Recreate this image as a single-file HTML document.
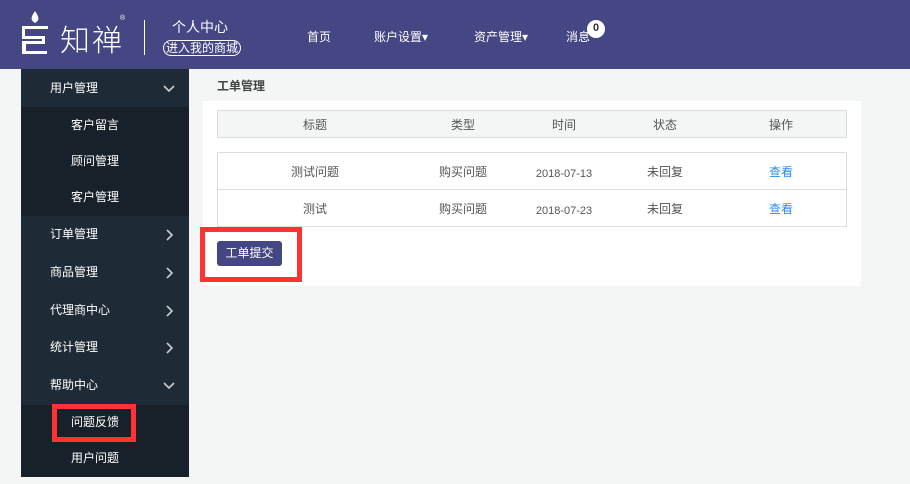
<!DOCTYPE html>
<html><head><meta charset="utf-8"><style>
*{margin:0;padding:0;box-sizing:border-box}
body{width:910px;height:484px;background:#f4f5f5;font-family:"Liberation Sans","Noto Sans CJK SC",sans-serif;font-size:12px;position:relative;overflow:hidden}
.hd{position:absolute;left:0;top:0;width:910px;height:69px;background:#444784;color:#fff}
.a{position:absolute;white-space:nowrap}
.sb{position:absolute;left:21px;top:69px;width:168px;height:408px;background:#1e2a36}
.it{position:absolute;left:0;width:168px;height:38px;line-height:38px;color:#fff;font-size:12px;padding-left:29px}
.sub{position:absolute;left:0;width:168px;background:#18202a}
.ch{position:absolute;right:14px;top:14px}
.panel{position:absolute;left:203px;top:101px;width:658px;height:185px;background:#fff}
.th{position:absolute;left:217px;top:110px;width:630px;height:28px;background:#f4f5f5;border:1px solid #ddd}
.tb{position:absolute;left:217px;top:152px;width:630px;height:75px;border:1px solid #ddd;background:#fff}
.c{position:absolute;color:#555;transform:translateX(-50%);white-space:nowrap}
.red{position:absolute;border:5px solid #f33}
</style></head><body>
<div class="hd">
<svg class="a" style="left:18px;top:10px" width="36" height="46" viewBox="0 0 36 46"><path d="M17 1 C13 7 12 10 17 13 C22 10 21 7 17 1Z" fill="#fff"/><path d="M4 16h26v3H7v7h20v8H8v7h21v3H4v-13h20v-2H4z" fill="#fff"/></svg>
<div class="a" style="left:60px;top:16px;font-size:30px;letter-spacing:2px;font-weight:300">知禅</div>
<div class="a" style="left:120px;top:15px;font-size:7px">®</div>
<div class="a" style="left:144px;top:20px;width:1px;height:35px;background:#fff"></div>
<div class="a" style="left:172px;top:17px;font-size:14px">个人中心</div>
<div class="a" style="left:163px;top:40px;font-size:12px;border:1px solid #fff;border-radius:8px;padding:0 2px;line-height:14px">进入我的商城</div>
<div class="a" style="left:307px;top:28px">首页</div>
<div class="a" style="left:374px;top:28px">账户设置▾</div>
<div class="a" style="left:474px;top:28px">资产管理▾</div>
<div class="a" style="left:566px;top:28px">消息</div>
<div class="a" style="left:587px;top:20px;width:18px;height:18px;border-radius:9px;background:#fff;color:#333;font-size:11px;font-weight:bold;text-align:center;line-height:17px">0</div>
</div>
<div class="sb">
<div class="sub" style="top:38px;height:109px"></div>
<div class="sub" style="top:336px;height:72px"></div>
<div class="it" style="top:0">用户管理<svg class="ch" width="12" height="10"><path d="M1 3l5 5 5-5" stroke="#ccc" stroke-width="1.6" fill="none"/></svg></div>
<div class="it" style="top:37px;padding-left:50px">客户留言</div>
<div class="it" style="top:73px;padding-left:50px">顾问管理</div>
<div class="it" style="top:109px;padding-left:50px">客户管理</div>
<div class="it" style="top:146px">订单管理<svg class="ch" width="12" height="12"><path d="M4 1l5 5-5 5" stroke="#ccc" stroke-width="1.6" fill="none"/></svg></div>
<div class="it" style="top:184px">商品管理<svg class="ch" width="12" height="12"><path d="M4 1l5 5-5 5" stroke="#ccc" stroke-width="1.6" fill="none"/></svg></div>
<div class="it" style="top:222px">代理商中心<svg class="ch" width="12" height="12"><path d="M4 1l5 5-5 5" stroke="#ccc" stroke-width="1.6" fill="none"/></svg></div>
<div class="it" style="top:259px">统计管理<svg class="ch" width="12" height="12"><path d="M4 1l5 5-5 5" stroke="#ccc" stroke-width="1.6" fill="none"/></svg></div>
<div class="it" style="top:297px">帮助中心<svg class="ch" width="12" height="10"><path d="M1 3l5 5 5-5" stroke="#ccc" stroke-width="1.6" fill="none"/></svg></div>
<div class="it" style="top:334px;padding-left:50px">问题反馈</div>
<div class="it" style="top:370px;padding-left:50px">用户问题</div>
</div>
<div class="red" style="left:52px;top:404px;width:84px;height:38px"></div>
<div class="a" style="left:217px;top:77px;font-weight:bold;color:#444">工单管理</div>
<div class="panel"></div>
<div class="th"></div>
<div class="c" style="left:315px;top:116px">标题</div>
<div class="c" style="left:463px;top:116px">类型</div>
<div class="c" style="left:564px;top:116px">时间</div>
<div class="c" style="left:665px;top:116px">状态</div>
<div class="c" style="left:781px;top:116px">操作</div>
<div class="tb"><div style="position:absolute;left:0;top:36px;width:628px;height:1px;background:#ddd"></div></div>
<div class="c" style="left:315px;top:163px">测试问题</div>
<div class="c" style="left:463px;top:163px">购买问题</div>
<div class="c" style="left:564px;top:169px;font-size:11px;line-height:11px">2018-07-13</div>
<div class="c" style="left:665px;top:163px">未回复</div>
<div class="c" style="left:781px;top:163px;color:#2a8ee8">查看</div>
<div class="c" style="left:315px;top:200px">测试</div>
<div class="c" style="left:463px;top:200px">购买问题</div>
<div class="c" style="left:564px;top:206px;font-size:11px;line-height:11px">2018-07-23</div>
<div class="c" style="left:665px;top:200px">未回复</div>
<div class="c" style="left:781px;top:200px;color:#2a8ee8">查看</div>
<div class="red" style="left:200px;top:227px;width:102px;height:55px"></div>
<div class="a" style="left:217px;top:241px;width:65px;height:25px;background:#444784;border-radius:3px;color:#fff;text-align:center;line-height:25px">工单提交</div>
</body></html>
